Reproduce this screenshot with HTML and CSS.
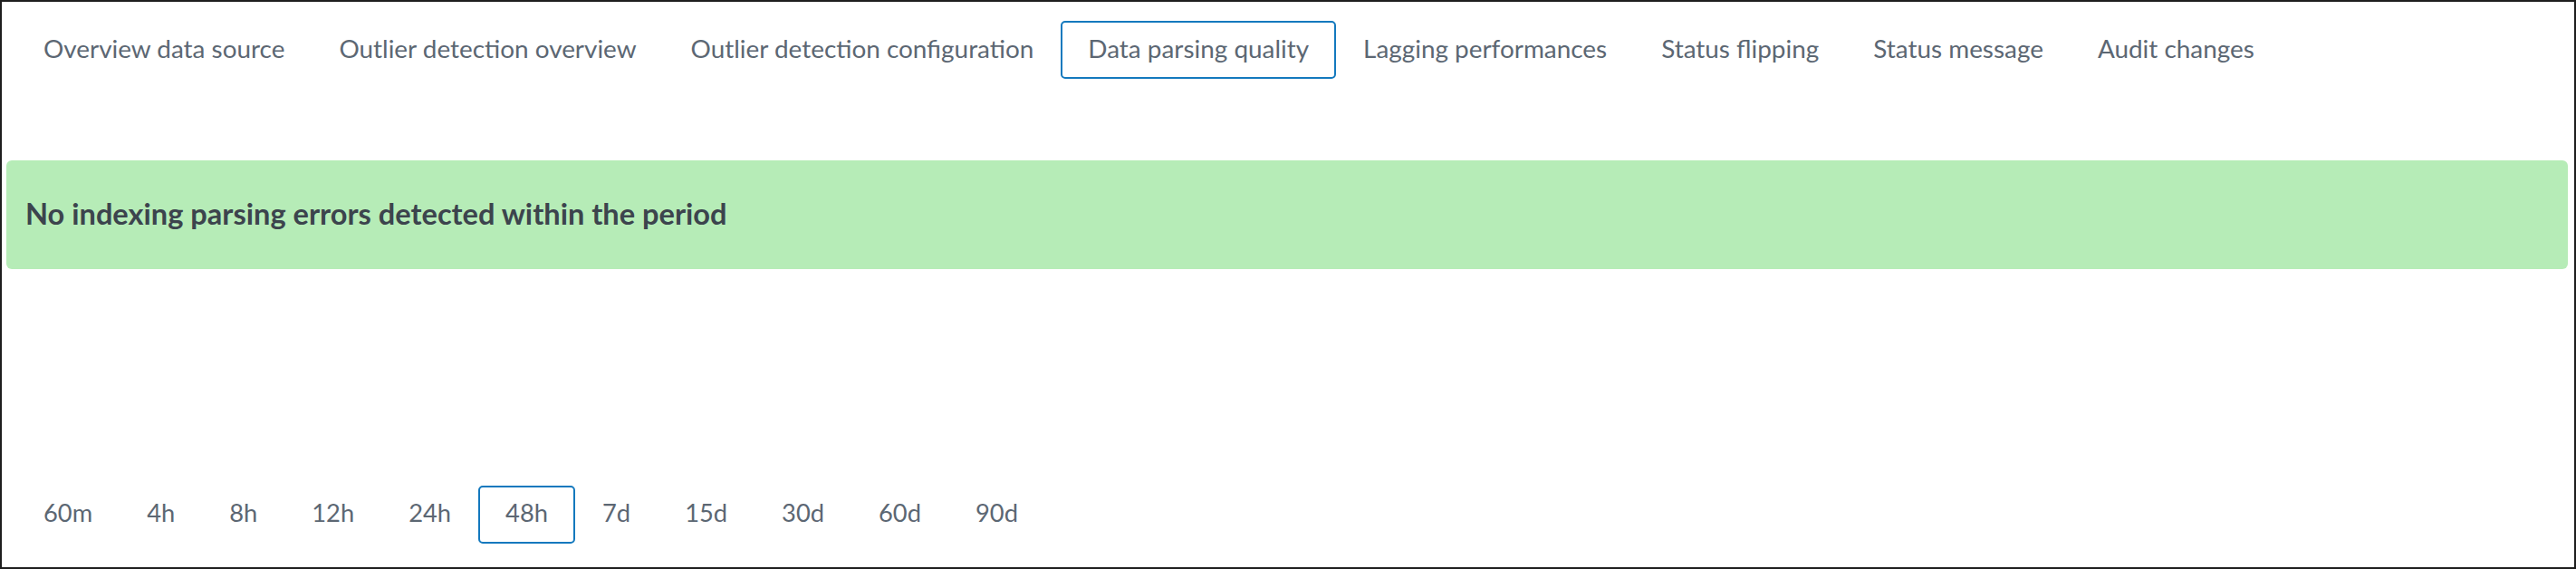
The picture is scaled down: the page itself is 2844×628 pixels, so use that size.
FILE: index.html
```html
<!DOCTYPE html>
<html>
<head>
<meta charset="utf-8">
<link rel="stylesheet" href="styles.css">
</head>
<body>
<div class="frame">
  <nav class="tabs">
    <div class="tab">Overview data source</div>
    <div class="tab">Outlier detection overview</div>
    <div class="tab">Outlier detection configuration</div>
    <div class="tab tab-active">Data parsing quality</div>
    <div class="tab">Lagging performances</div>
    <div class="tab">Status flipping</div>
    <div class="tab">Status message</div>
    <div class="tab">Audit changes</div>
  </nav>
  <div class="banner">No indexing parsing errors detected within the period</div>
  <div class="ranges">
    <div class="tab">60m</div>
    <div class="tab">4h</div>
    <div class="tab">8h</div>
    <div class="tab">12h</div>
    <div class="tab">24h</div>
    <div class="tab tab-active">48h</div>
    <div class="tab">7d</div>
    <div class="tab">15d</div>
    <div class="tab">30d</div>
    <div class="tab">60d</div>
    <div class="tab">90d</div>
  </div>
</div>
</body>
</html>
```

FILE: styles.css
```css
html, body {
  margin: 0;
  padding: 0;
  background: #ffffff;
}

.frame {
  box-sizing: border-box;
  width: 2844px;
  height: 628px;
  border: 2px solid #1e1e1e;
  background: #ffffff;
  font-family: Lato, "Open Sans", sans-serif;
  display: flex;
  flex-direction: column;
}

.tabs,
.ranges {
  display: flex;
  padding-left: 16px;
}

.tabs {
  margin-top: 21px;
  font-size: 27.9px;
}

.ranges {
  margin-top: 239px;
  font-size: 27.3px;
}

.tab {
  box-sizing: border-box;
  height: 64px;
  padding: 0 28px 4px 28px;
  line-height: 56px;
  border: 2px solid transparent;
  border-radius: 5px;
  color: #5c6773;
  white-space: nowrap;
}

.tab-active {
  border-color: #1479be;
}

.banner {
  box-sizing: border-box;
  margin: 90px 7px 0 5px;
  height: 120px;
  padding: 0 0 4px 21px;
  display: flex;
  align-items: center;
  background: #b6ecb7;
  border-radius: 6px;
  font-size: 32.6px;
  font-weight: 700;
  color: #3c444d;
  white-space: nowrap;
}
```
